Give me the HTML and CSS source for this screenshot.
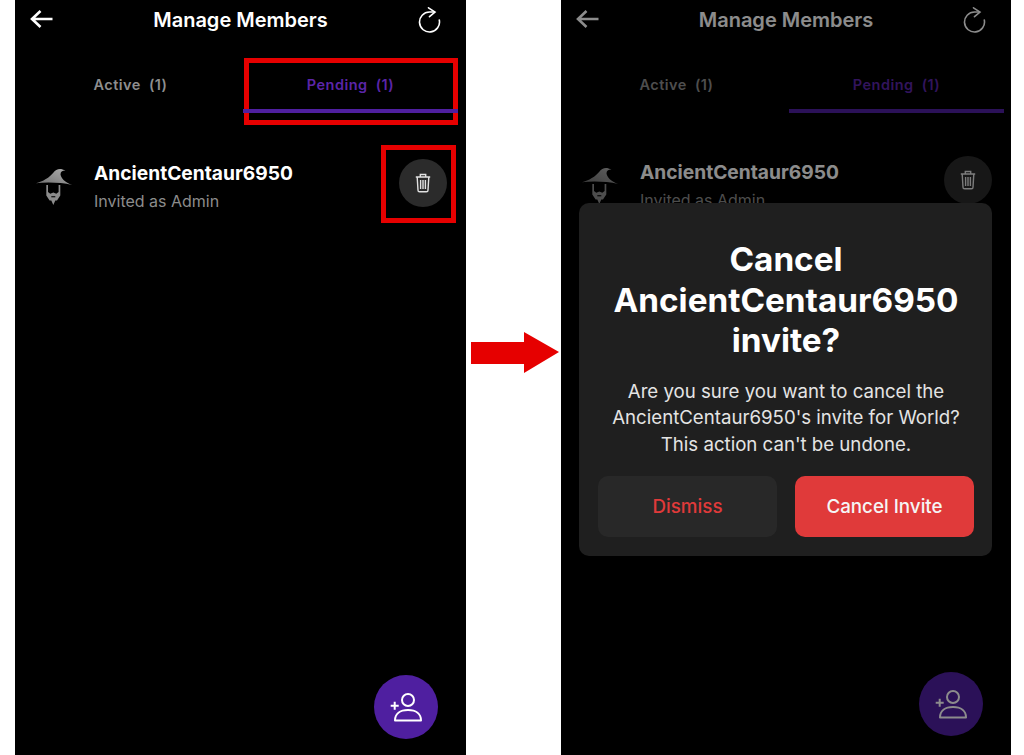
FILE: index.html
```html
<!DOCTYPE html>
<html lang="en">
<head>
    <meta charset="UTF-8">
    <meta name="viewport" content="width=device-width, initial-scale=1.0">
    <title>Manage Members</title>
    <link rel="stylesheet" href="styles.css">
</head>
<body>

    <svg class="icon-defs" width="0" height="0" aria-hidden="true">
        <defs>
            <linearGradient id="hat-fill" x1="0" y1="1" x2="1" y2="0">
                <stop offset="0" stop-color="#6e6e6e"/>
                <stop offset="1" stop-color="#b0b0b0"/>
            </linearGradient>
            <symbol id="i-back" viewBox="0 0 24 20">
                <path d="M22.500 10H2M10.500 2 2 10l8.500 8" fill="none" stroke="currentColor" stroke-width="2.600"/>
            </symbol>
            <symbol id="i-refresh" viewBox="0 0 24 26">
                <path d="M17 5H12.500A10 10 0 1 0 22.300 13" fill="none" stroke="currentColor" stroke-width="1.600" stroke-linecap="round"/>
                <path d="M11.500 .8 18 5 12.500 9.700" fill="none" stroke="currentColor" stroke-width="1.600" stroke-linecap="round"/>
            </symbol>
            <symbol id="i-wizard" viewBox="0 0 38 40">
                <path d="M.8 17.300C8 15.500 14.500 11.500 18.500 6.500 21 3 25 1.500 30.500 4.500 27 4.500 25.500 6 25.500 8.500 26 12 30 16.500 37.200 19 26 16.500 12 16 .8 17.300Z" fill="url(#hat-fill)"/>
                <path d="M11.300 19h1.700v7l2.300 1.800 3-1.300 3 1.300 2.300-1.800v-7h1.700v10.500l-3.300 5h-1.700l-2 4.500-2-4.500h-1.700l-3.300-5V19Z" fill="#8c8c8c"/>
                <path d="M16.300 30.200h4v1.100h-4Z" fill="#000"/>
            </symbol>
            <symbol id="i-trash" viewBox="0 0 16 20">
                <path d="M.8 4h14.400M5.300 3.800V1.500h5.400v2.300M2.200 4.200l.8 13c0 1 .7 1.600 1.600 1.600h6.800c.9 0 1.600-.6 1.600-1.600l.8-13M5.600 7v9M8 7v9M10.400 7v9" fill="none" stroke="currentColor" stroke-width="1.400"/>
            </symbol>
            <symbol id="i-add-user" viewBox="0 0 36 36">
                <circle cx="20" cy="11" r="6" fill="none" stroke="currentColor" stroke-width="2"/>
                <path d="M7 31.500c0-6.500 5-10.500 13-10.500S33 25 33 31.500Z" fill="none" stroke="currentColor" stroke-width="2" stroke-linejoin="round"/>
                <path d="M2.700 16.700h8M6.700 12.700v8" fill="none" stroke="currentColor" stroke-width="2"/>
            </symbol>
        </defs>
    </svg>

    <!-- Before -->
    <section class="phone">
        <header class="topbar">
            <svg class="back-icon"><use href="#i-back"/></svg>
            <h1>Manage Members</h1>
            <svg class="refresh-icon"><use href="#i-refresh"/></svg>
        </header>
        <nav class="tabs">
            <div class="tab">Active&nbsp; (1)</div>
            <div class="tab tab-on">Pending&nbsp; (1)</div>
        </nav>
        <div class="member">
            <svg class="avatar"><use href="#i-wizard"/></svg>
            <div class="member-info">
                <div class="member-name">AncientCentaur6950</div>
                <div class="member-role">Invited as Admin</div>
            </div>
            <button class="trash"><svg><use href="#i-trash"/></svg></button>
        </div>
        <button class="fab"><svg><use href="#i-add-user"/></svg></button>
        <div class="mark mark-tab"></div>
        <div class="mark mark-trash"></div>
    </section>

    <div class="between">
        <svg class="arrow" viewBox="0 0 88 41"><path d="M0 10H53V0L88 20 53 41V32H0Z" fill="#e60000"/></svg>
    </div>

    <!-- After -->
    <section class="phone phone-after">
        <header class="topbar">
            <svg class="back-icon"><use href="#i-back"/></svg>
            <h1>Manage Members</h1>
            <svg class="refresh-icon"><use href="#i-refresh"/></svg>
        </header>
        <nav class="tabs">
            <div class="tab">Active&nbsp; (1)</div>
            <div class="tab tab-on">Pending&nbsp; (1)</div>
        </nav>
        <div class="member">
            <svg class="avatar"><use href="#i-wizard"/></svg>
            <div class="member-info">
                <div class="member-name">AncientCentaur6950</div>
                <div class="member-role">Invited as Admin</div>
            </div>
            <button class="trash"><svg><use href="#i-trash"/></svg></button>
        </div>
        <button class="fab"><svg><use href="#i-add-user"/></svg></button>

        <div class="scrim">
            <div class="dialog">
                <h2>Cancel AncientCentaur6950 invite?</h2>
                <p>Are you sure you want to cancel the AncientCentaur6950's invite for World? This action can't be undone.</p>
                <div class="dialog-actions">
                    <button class="btn btn-dismiss">Dismiss</button>
                    <button class="btn btn-cancel">Cancel Invite</button>
                </div>
            </div>
        </div>
    </section>

</body>
</html>
```

FILE: styles.css
```css
* {
    box-sizing: border-box;
}

body {
    font-family: Inter, 'Liberation Sans', sans-serif;
    background-color: #fff;
    margin: 0;
    padding: 0 14px 0 15px;
    height: 755px;
    overflow: hidden;
    display: flex;
    color: #fff;
}

.icon-defs {
    position: absolute;
}

button {
    font-family: inherit;
    border: none;
    padding: 0;
}

.phone {
    position: relative;
    width: 451px;
    height: 755px;
    background-color: #000;
    overflow: hidden;
    flex: none;
}

.phone-after {
    width: 450px;
}

.between {
    width: 95px;
    flex: none;
    padding: 332px 0 0 5px;
}

.arrow {
    display: block;
    width: 88px;
    height: 41px;
}

/* Top bar */
.topbar {
    height: 40px;
    display: grid;
    grid-template-columns: 1fr auto 1fr;
    align-items: center;
    padding: 0 15px;
}

.topbar h1 {
    margin: 0;
    font-size: 20px;
    font-weight: 600;
}

.back-icon {
    width: 24px;
    height: 20px;
    margin-bottom: 2px;
}

.refresh-icon {
    width: 24px;
    height: 26px;
    justify-self: end;
    margin-right: 10px;
}

/* Tabs */
.tabs {
    display: grid;
    grid-template-columns: 1fr 215px;
    gap: 5px;
    padding: 0 8px;
    margin-top: 20px;
}

.tab {
    height: 53px;
    padding-top: 15px;
    text-align: center;
    font-size: 14.500px;
    line-height: 20px;
    font-weight: 600;
    letter-spacing: 0.45px;
    color: #8e8e8e;
}

/* the underline runs over the red box */
.tab-on {
    position: relative;
    z-index: 1;
    color: #5b25a8;
    border-bottom: 4px solid #4f1fa0;
}

/* Member row */
.member {
    display: flex;
    align-items: flex-start;
    padding: 46px 19px 0 20px;
}

.avatar {
    width: 38px;
    height: 40px;
    margin-top: 7px;
    flex: none;
}

.member-info {
    flex: 1;
    margin-left: 21px;
}

.member-name {
    font-size: 19.200px;
    line-height: 29px;
    font-weight: 700;
}

.member-role {
    font-size: 16px;
    line-height: 27px;
    color: #8c8c8c;
}

.trash {
    width: 48px;
    height: 48px;
    border-radius: 50%;
    background-color: #2b2b2b;
    color: #e2e2e2;
    display: flex;
    align-items: center;
    justify-content: center;
}

.trash svg {
    width: 16px;
    height: 20px;
}

.fab {
    position: absolute;
    right: 28px;
    bottom: 16px;
    width: 64px;
    height: 64px;
    border-radius: 50%;
    background-color: #4f1fa0;
    color: #fff;
    display: flex;
    align-items: center;
    justify-content: center;
}

.fab svg {
    width: 36px;
    height: 36px;
}

/* Red annotation boxes */
.mark {
    position: absolute;
    border: 5px solid #e60000;
}

.mark-tab {
    left: 229px;
    top: 58px;
    width: 214px;
    height: 67px;
}

.mark-trash {
    left: 366px;
    top: 145px;
    width: 75px;
    height: 78px;
}

/* Second phone, small shifts from the first */
.phone-after .member {
    padding-top: 45px;
}

.phone-after .trash {
    margin-top: -2px;
    background-color: #2a2a2a;
}

.phone-after .tabs {
    padding-right: 7px;
}

.phone-after .fab {
    bottom: 19px;
}

/* Dialog */
.scrim {
    position: absolute;
    inset: 0;
    z-index: 2;
    background-color: rgba(0, 0, 0, 0.45);
    padding: 203px 19px 0 18px;
}

.dialog {
    background-color: #1f1f1f;
    border-radius: 10px;
    padding: 36px 18px 19px 19px;
    text-align: center;
}

.dialog h2 {
    margin: 0;
    font-size: 33.300px;
    line-height: 40.500px;
    font-weight: 700;
}

.dialog p {
    margin: 17px 0 19px;
    font-size: 18.650px;
    line-height: 26.500px;
    color: #e4e4e4;
}

.dialog-actions {
    display: grid;
    grid-template-columns: 1fr 1fr;
    gap: 18px;
}

.btn {
    height: 61px;
    border-radius: 10px;
    font-size: 18.800px;
    font-weight: 500;
}

.btn-dismiss {
    background-color: #282828;
    color: #e03a3a;
}

.btn-cancel {
    background-color: #e03a3a;
    color: #f5f5f5;
}
```
